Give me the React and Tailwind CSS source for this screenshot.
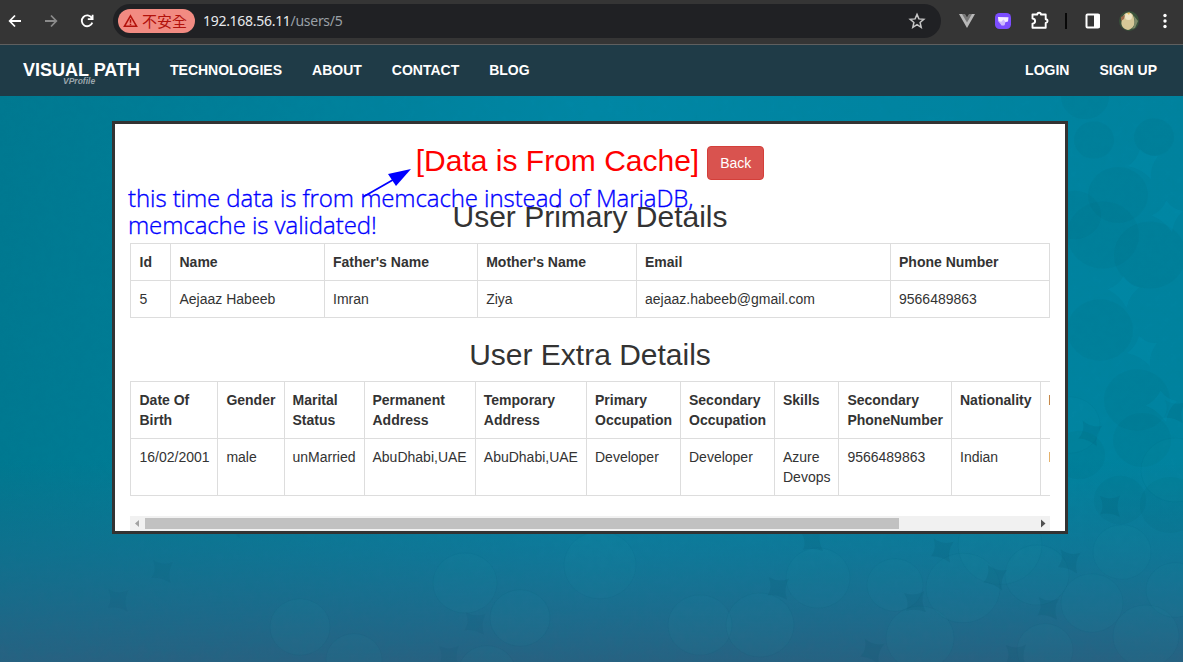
const primary = {
  cols: [40, 154, 153, 159, 254, 159],
  pad: [8.5, 8.5, 8, 8.2, 8, 8],
  head: ["Id", "Name", "Father's Name", "Mother's Name", "Email", "Phone Number"],
  row: ["5", "Aejaaz Habeeb", "Imran", "Ziya", "aejaaz.habeeb@gmail.com", "9566489863"],
};

const extra = {
  cols: [87, 67, 80, 111, 111, 94, 94, 64, 113, 89, 90],
  pad: [8.5, 8.4, 7.5, 7.5, 7.8, 8, 8, 8, 8.4, 8, 7.4],
  head: ["Date Of Birth", "Gender", "Marital Status", "Permanent Address", "Temporary Address", "Primary Occupation", "Secondary Occupation", "Skills", "Secondary PhoneNumber", "Nationality", "Language"],
  row: ["16/02/2001", "male", "unMarried", "AbuDhabi,UAE", "AbuDhabi,UAE", "Developer", "Developer", "Azure Devops", "9566489863", "Indian", "English"],
};

function Table({ data, width }) {
  const cell = "border border-[#ddd] py-2 pr-1 align-top text-left leading-5";
  return (
    <table className="table-fixed border-collapse text-[14px]" style={{ width }}>
      <colgroup>
        {data.cols.map((w, i) => <col key={i} style={{ width: w }} />)}
      </colgroup>
      <thead>
        <tr>{data.head.map((h, i) => <th key={i} className={cell + " font-bold"} style={{ paddingLeft: data.pad[i] }}>{h}</th>)}</tr>
      </thead>
      <tbody>
        <tr>{data.row.map((h, i) => <td key={i} className={cell} style={{ paddingLeft: data.pad[i] }}>{h}</td>)}</tr>
      </tbody>
    </table>
  );
}

function BrowserBar() {
  return (
    <div className="flex h-[45px] shrink-0 items-start border-b border-[#5f5f5f] bg-[#353535]">
      <div className="flex h-[42px] w-[113px] shrink-0 items-center">
        <svg width="113" height="42" fill="none" stroke="#fff" strokeWidth="1.8">
          <path d="M21 21H10M15 15.5L9.7 21L15 26.5" />
          <path d="M45 21H56M51 15.5L56.3 21L51 26.5" stroke="#8b8b8b" />
          <path d="M91.8 18A5.4 5.4 0 1 0 92.3 22.6M92.6 14.8V19.2H87.8" />
        </svg>
      </div>
      <div className="mt-1 flex h-[34px] w-[828px] shrink-0 items-center rounded-full bg-[#202124] pl-[5px] pr-[15px]">
        <div className="flex h-6 w-[77px] items-center rounded-full bg-[#f28b82] pl-[5px] text-[#b3120c]">
          <svg width="15" height="14" viewBox="0 0 15 14" fill="none" stroke="currentColor" strokeWidth="1.5">
            <path d="M7.5 1.8L13.6 12.3H1.4Z" />
            <path d="M7.5 5.3V8.8M7.5 9.8V11.2" />
          </svg>
          <span className="ml-[4px] whitespace-nowrap font-['Noto_Sans_CJK_TC',sans-serif] text-[15px] leading-6">不安全</span>
        </div>
        <div className="ml-2 grow whitespace-nowrap font-['Noto_Sans',sans-serif] text-[14px] leading-6 tracking-[-0.29px] text-[#e8eaed]">
          192.168.56.11<span className="text-[#9aa0a6]">/users/5</span>
        </div>
        <svg width="18" height="18" viewBox="0 0 18 18" fill="none" stroke="#c7c7c7" strokeWidth="1.5">
          <path d="M9 2.4L10.9 6.9L15.8 7.3L12.1 10.5L13.2 15.3L9 12.7L4.8 15.3L5.9 10.5L2.2 7.3L7.1 6.9Z" />
        </svg>
      </div>
      <svg width="242" height="42" viewBox="941 0 242 42" className="shrink-0">
        <path d="M959 14H964.5L967 18L969.5 14H975L967 28Z" fill="#b8b8b8" />
        <path d="M962 14H965L967 17.5L969 14H972L967 22.5Z" fill="#777" />
        <rect x="995" y="13" width="16" height="16" rx="4.5" fill="#7c4dff" />
        <path d="M998 17L1008.5 17.3L1008 21.5L1004.8 22.3L1004.3 25.3H1001.5L1001 22L998.4 21.4Z" fill="#f5edff" />
        <path d="M998.4 21.4L1001 22L1003.5 19.5L1005.500 22L1004.300 25.300H1001.500Z" fill="#cdb9ff" />
        <path d="M1032.5 14.5H1037.3A1.8 1.8 0 0 1 1040.9 14.5H1045.7V19.3A1.8 1.8 0 0 1 1045.7 22.9V27.7H1032.5V23.6C1036 23.6 1036 18.6 1032.5 18.6Z" fill="none" stroke="#fff" strokeWidth="1.9" strokeLinejoin="round" />
        <rect x="1065" y="13" width="2" height="16" fill="#080808" />
        <rect x="1086.5" y="14.5" width="12.5" height="13" rx="1" fill="none" stroke="#fff" strokeWidth="2" />
        <rect x="1094" y="14" width="5.5" height="14" fill="#fff" />
        <circle cx="1129" cy="21" r="10" fill="#39513b" />
        <path d="M1126 13C1131 11 1134 15 1134 19C1136 24 1133 29 1128 30C1123 29 1120 25 1122 20C1123 17 1123 15 1126 13Z" fill="#d6c998" />
        <circle cx="1128.5" cy="16.500" r="3.500" fill="#eee5c4" />
        <path d="M1121 17L1125 15L1124 19L1121 21Z" fill="#9c6a4a" />
        <path d="M1127 13L1130 12.500L1129 15Z" fill="#e8b950" />
        <path d="M1134 16L1138 21L1135 28L1132 29C1136 24 1134 20 1134 16Z" fill="#7d8a69" />
        <g fill="#fff"><circle cx="1165" cy="15.5" r="1.7" /><circle cx="1165" cy="21" r="1.7" /><circle cx="1165" cy="26.5" r="1.7" /></g>
      </svg>
    </div>
  );
}

const light = [
  [1122, 552, 29], [1037, 575, 32], [1092, 603, 31], [818, 578, 32], [963, 588, 37], [1175, 590, 29], [1146, 636, 33],
  [895, 585, 28], [920, 638, 34], [520, 618, 30], [465, 583, 32], [487, 673, 29], [300, 627, 30], [354, 660, 28],
  [700, 625, 32], [1070, 425, 30], [1000, 545, 42], [1045, 650, 28], [760, 625, 34], [600, 565, 36], [1175, 470, 34],
];

const dark = [
  [1142, 440, 29], [1079, 455, 26], [1170, 505, 30], [1137, 400, 33], [1103, 235, 36], [1150, 255, 36],
  [1094, 140, 20], [1154, 137, 20], [1118, 195, 30], [1075, 215, 26], [1100, 330, 33], [1085, 97, 24], [1120, 500, 26],
];

const gaps = [
  [812, 541, 0], [942, 550, 15], [778, 588, 10], [1090, 433, 20], [1110, 506, 5], [1069, 561, 15], [1048, 608, 10],
  [995, 577, 20], [915, 602, 0], [872, 651, 20], [1016, 655, 5], [475, 623, 10], [162, 571, 12], [449, 656, 5],
  [1174, 411, 12], [235, 524, 30], [118, 600, 8],
];

const sparks = [[1142, 163, 0], [1166, 215, 10], [1141, 350, 0], [1122, 290, 15], [1160, 405, 10]];

function Backdrop() {
  return (
    <svg width="1183" height="566" viewBox="0 96 1183 566" className="absolute inset-0" aria-hidden="true">
      <defs>
        <linearGradient id="base" x1="0" y1="0" x2="1" y2="0">
          <stop offset="0" stopColor="#007991" />
          <stop offset="0.5" stopColor="#0087a5" />
          <stop offset="1" stopColor="#00839f" />
        </linearGradient>
        <linearGradient id="fade" x1="0" y1="0" x2="0" y2="1">
          <stop offset="0.64" stopColor="#2c6485" stopOpacity="0" />
          <stop offset="0.8" stopColor="#28648a" stopOpacity="0.38" />
          <stop offset="1" stopColor="#2a6080" stopOpacity="0.96" />
        </linearGradient>
        <filter id="grain" x="0" y="0" width="1" height="1">
          <feTurbulence type="fractalNoise" baseFrequency="0.13" numOctaves="3" seed="8" />
          <feColorMatrix values="0 0 0 0 0  0 0 0 0 .18  0 0 0 0 .25  .3 0 0 0 -.08" />
        </filter>
      </defs>
      <rect y="96" width="1183" height="566" fill="url(#base)" />
      <rect y="96" width="1183" height="566" fill="url(#fade)" />
      {dark.map(([x, y, r], i) => (
        <ellipse key={i} cx={x} cy={y} rx={r} ry={r * 0.93} fill="#00516a" fillOpacity="0.07" />
      ))}
      {light.map(([x, y, r], i) => (
        <ellipse key={i} cx={x} cy={y} rx={r} ry={r * 0.94} fill="#2aa3b8" fillOpacity="0.055" stroke="#004f65" strokeOpacity="0.05" />
      ))}
      {gaps.map(([x, y, a], i) => (
        <path key={i} transform={`translate(${x} ${y}) rotate(${a})`} d="M-11 -9Q0 -5 9 -11Q5 0 11 10Q0 6 -9 9Q-5 0 -11 -9" fill="#004b63" fillOpacity={x < 700 ? 0.07 : 0.13} />
      ))}
      {sparks.map(([x, y, a], i) => (
        <path key={i} transform={`translate(${x} ${y}) rotate(${a})`} d="M-14 3Q-5 -3 -2 -14Q6 -6 16 -7Q8 3 9 16Q0 6 -14 3" fill="#0090ae" fillOpacity="0.35" />
      ))}
      <rect y="96" width="1183" height="566" filter="url(#grain)" opacity="0.5" />
    </svg>
  );
}

export default function App() {
  return (
    <div className="relative flex h-[662px] w-[1183px] flex-col overflow-hidden font-['Liberation_Sans',sans-serif] text-[#333]">
      <BrowserBar />
      <nav className="flex h-[51px] shrink-0 items-start bg-[#1f3b47] pl-[23px] pr-[26px] text-[14px] font-bold leading-5 text-white">
        <div className="w-[117px] pt-[15px]">
          <div className="whitespace-nowrap text-[18px] leading-5">VISUAL PATH</div>
          <div className="-mt-[3px] pl-10 text-[8.5px] italic leading-[9px] text-[#9aa6ac]">VProfile</div>
        </div>
        <div className="ml-[30px] flex grow gap-[30px] pt-[15px]">
          <span>TECHNOLOGIES</span><span>ABOUT</span><span>CONTACT</span><span>BLOG</span>
        </div>
        <div className="flex gap-[30px] pt-[15px]"><span>LOGIN</span><span>SIGN UP</span></div>
      </nav>
      <main className="relative h-[566px] shrink-0 pl-[112px] pt-[25px]">
        <Backdrop />
        <section className="relative h-[413px] w-[956px] border-[3px] border-[#333] bg-white px-[15px]">
          <div className="flex h-[76px] items-start justify-center pt-[20px]">
            <h2 className="whitespace-nowrap text-[30px] leading-[33px] text-[#f00]">[Data is From Cache]</h2>
            <button className="ml-2 mt-[2px] h-[34px] w-[57px] rounded border border-[#d43f3a] bg-[#d9534f] text-[14px] leading-5 text-white">Back</button>
          </div>
          <h2 className="h-[43px] text-center text-[30px] leading-[33px]">User Primary Details</h2>
          <Table data={primary} width={920} />
          <h2 className="mb-[10px] mt-[20px] text-center text-[30px] leading-[33px]">User Extra Details</h2>
          <div className="h-[135px] overflow-hidden">
            <Table data={extra} width={960} />
          </div>
          <div className="flex h-[15px] items-center bg-[#f1f1f1]">
            <svg width="15" height="15"><path d="M5 7.5L9 4V11Z" fill="#a3a3a3" /></svg>
            <div className="h-[11px] w-[754px] bg-[#c1c1c1]" />
            <div className="grow" />
            <svg width="15" height="15"><path d="M10.5 7.5L6 3.500V11.500Z" fill="#505050" /></svg>
          </div>
        </section>
      </main>
      <div className="absolute left-[128px] top-[184px] font-['Open_Sans',sans-serif] text-[24px] font-light leading-[27px] tracking-[-0.08px] text-[#00f] [-webkit-text-stroke:0.35px_#00f]">
        <div className="whitespace-nowrap">this time data is from memcache instead of MariaDB,</div>
        <div className="whitespace-nowrap">memcache is validated!</div>
      </div>
      <svg className="absolute left-[360px] top-[165px]" width="54" height="38" viewBox="360 165 54 38">
        <path d="M363 197L398 177" stroke="#00f" strokeWidth="1.8" />
        <path d="M411 169L388 174L396 186Z" fill="#00f" />
      </svg>
    </div>
  );
}
